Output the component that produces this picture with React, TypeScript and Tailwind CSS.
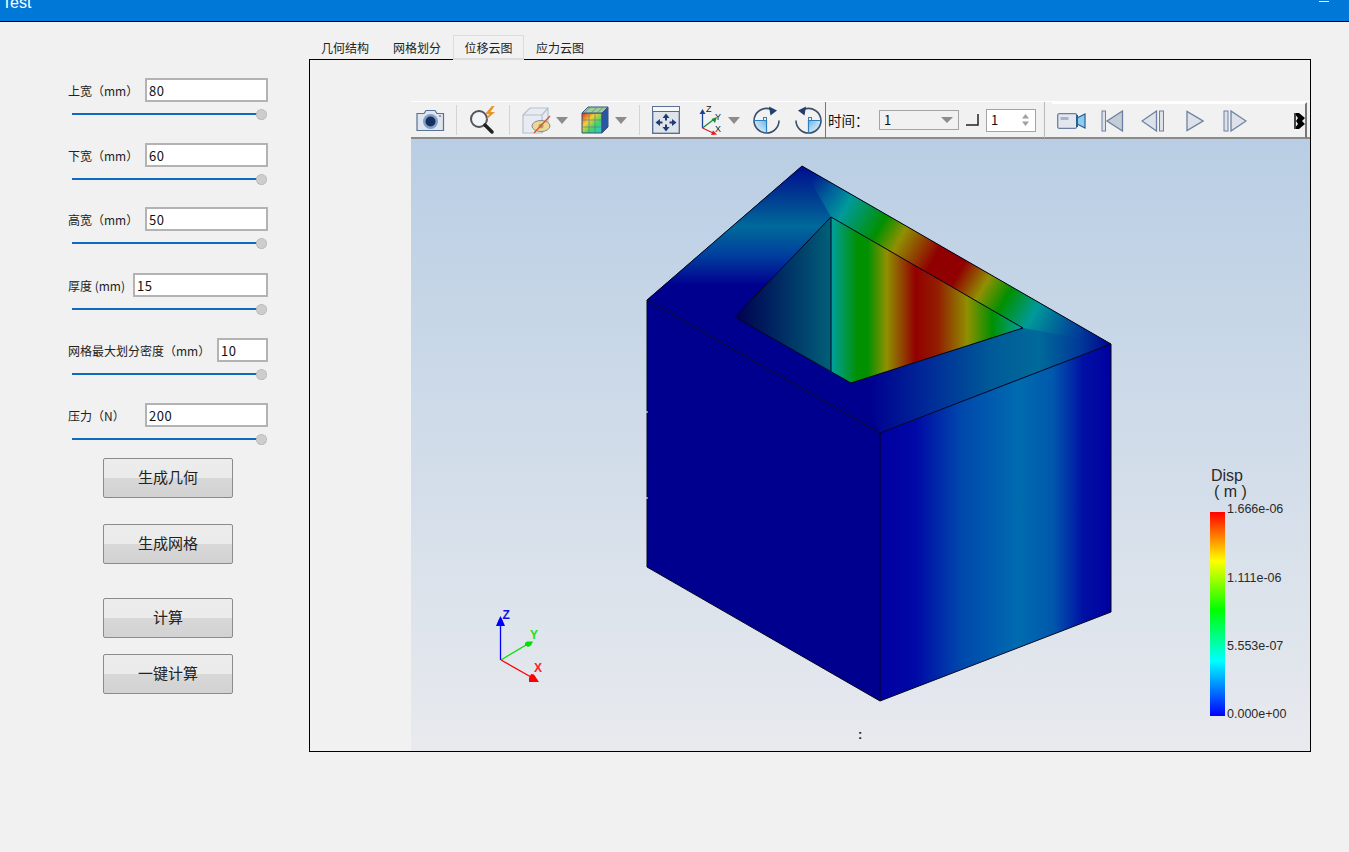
import React from "react";

const cjk = { fontFamily: '"Noto Sans CJK SC", "Noto Sans", sans-serif' };

function Row({ label, labelW, value, mt }: { label: string; labelW: string; value: string; mt: string }) {
  return (
    <div className={mt}>
      <div className="flex items-center h-[24px]">
        <div className={`${labelW} pt-[1px] text-[12px] text-[#222] whitespace-pre`}>{label}</div>
        <div className="flex-1 h-[24px] border-2 border-[#b3b3b3] bg-white flex items-center pl-[2px] pt-[1px] text-[13px] text-[#111] tracking-[0.5px]">
          {value}
        </div>
      </div>
      <div className="flex items-center h-[10px] mt-[7px] ml-[4px] w-[195px]">
        <div className="flex-1 h-[2px] bg-[#0f69bd]" />
        <div className="w-[11px] h-[11px] -ml-[6px] rounded-full bg-[#cdcdcd] border border-dotted border-[#a8a8a8]" />
      </div>
    </div>
  );
}

function Btn({ text, mt }: { text: string; mt: string }) {
  return (
    <div
      className={`${mt} ml-[35px] w-[130px] h-[40px] pb-[1px] rounded-[2px] border border-[#8b8b8b] flex items-center justify-center text-[15px] text-[#222] bg-[linear-gradient(#ececec_0%,#ebebeb_50%,#d8d8d8_50%,#d2d2d2_100%)]`}
    >
      {text}
    </div>
  );
}

function Sep({ ml }: { ml: string }) {
  return <div className={`${ml} w-[1px] h-[30px] bg-[#d4d4d4] shrink-0`} />;
}

function Caret({ ml }: { ml: string }) {
  return (
    <svg className={`${ml} shrink-0`} width="12" height="7" viewBox="0 0 12 7">
      <path d="M0 0H12L6 7Z" fill="#8c8c8c" />
    </svg>
  );
}

function CameraIcon() {
  return (
    <svg width="29" height="26" viewBox="0 0 29 26">
      <path d="M1 6.500h7l2-3h9l2 3h6.500v17H1z" fill="#dfe5ee" stroke="#5a7196" strokeWidth="1.200" />
      <circle cx="14.500" cy="14.500" r="7.500" fill="#7f9fc6" />
      <circle cx="14.500" cy="14.500" r="5" fill="#15305f" />
      <circle cx="24" cy="9" r="1" fill="#6c84a8" />
    </svg>
  );
}

function ZoomBolt() {
  return (
    <svg width="30" height="30" viewBox="0 0 30 30">
      <circle cx="11" cy="14" r="8" fill="#f2f5f8" stroke="#555" strokeWidth="2" />
      <path d="M17 20l7 7" stroke="#222" strokeWidth="3.500" strokeLinecap="round" />
      <path d="M24 1l-7 8h4l-3 6 9-8h-4.500l4-6z" fill="#e9932b" />
    </svg>
  );
}

function CubeEye() {
  return (
    <svg width="30" height="30" viewBox="0 0 30 30">
      <path d="M1 10l7-7h18v18l-6 7H1z" fill="#e8ecf2" stroke="#b4bfce" strokeWidth="1.200" />
      <path d="M1 10h19v18M20 10l6-7" fill="none" stroke="#b4bfce" strokeWidth="1.200" />
      <ellipse cx="19" cy="21" rx="9" ry="5.500" fill="#f0d98e" stroke="#7d8aa0" />
      <circle cx="19" cy="21" r="2.500" fill="#a9a37a" />
      <path d="M12 28L28 11" stroke="#d4562a" strokeWidth="1.300" />
    </svg>
  );
}

function ColorCube() {
  return (
    <svg width="28" height="28" viewBox="0 0 28 28">
      <defs>
        <linearGradient id="cc" x1="0" y1="0" x2="1" y2="1">
          <stop offset="0" stopColor="#e02b20" />
          <stop offset="0.350" stopColor="#f2d033" />
          <stop offset="0.650" stopColor="#3fd46a" />
          <stop offset="1" stopColor="#2fbfe8" />
        </linearGradient>
      </defs>
      <path d="M1 7h20v20H1z" fill="url(#cc)" stroke="#38507a" />
      <path d="M1 7l6-6h20l-6 6z" fill="#9ccf9b" stroke="#38507a" />
      <path d="M21 7l6-6v20l-6 6z" fill="#2a56a8" stroke="#38507a" />
      <path d="M8 7v20M14 7v20M1 14h20M1 21h20M9 1.500L3 7M16 1.500L10 7M22 1.500L16 7" stroke="#5a6f92" strokeWidth="0.600" fill="none" />
    </svg>
  );
}

function MoveIcon() {
  return (
    <svg width="28" height="28" viewBox="0 0 28 28">
      <rect x="0.700" y="0.700" width="26.600" height="26.600" fill="#dfe4ec" stroke="#54698e" strokeWidth="1.300" />
      <rect x="1" y="1" width="26" height="4" fill="#f7f8fa" />
      <path d="M1 5.500h26" stroke="#54698e" />
      <path d="M14 7.500l3.500 4.500h-2.500v2.500h-2V12h-2.500zM14 25.500l-3.500-4.500h2.500v-2.500h2V21h2.500zM3.500 16.500l4.500-3.500v2.500h2.500v2H8V20zM24.500 16.500L20 20v-2.500h-2.500v-2H20V13z" fill="#1f3d70" />
    </svg>
  );
}

function AxesIcon() {
  return (
    <svg width="26" height="30" viewBox="0 0 26 30" style={{ fontFamily: '"Liberation Sans", sans-serif' }}>
      <path d="M5.500 23V8" stroke="#1c3f95" strokeWidth="1.300" />
      <path d="M5.500 4l3 5h-6z" fill="#1c3f95" />
      <path d="M5.500 23L16 15" stroke="#1f8a3d" strokeWidth="1.300" />
      <path d="M20 12l-2 6-3.500-4z" fill="#1f8a3d" />
      <path d="M5.500 23L16 28" stroke="#d81f26" strokeWidth="1.300" />
      <path d="M20 29.500l-6 .5 2-4.500z" fill="#d81f26" />
      <text x="9" y="7" fontSize="9" fill="#222">Z</text>
      <text x="18" y="15" fontSize="9" fill="#222">Y</text>
      <text x="18" y="27" fontSize="9" fill="#222">X</text>
    </svg>
  );
}

function RotIcon({ flip }: { flip?: boolean }) {
  return (
    <svg width="27" height="28" viewBox="0 0 27 28" style={flip ? { transform: "scaleX(-1)" } : undefined}>
      <defs>
        <radialGradient id="quad" gradientUnits="userSpaceOnUse" cx="13.500" cy="14.500" r="13">
          <stop offset="0" stopColor="#6db6ea" />
          <stop offset="1" stopColor="#d3e9f8" />
        </radialGradient>
      </defs>
      <path d="M13.500 14.500H1a12.500 12.500 0 0 0 12.500 12.500z" fill="url(#quad)" />
      <path d="M18 3.300A12.500 12.500 0 0 0 1 14.500a12.500 12.500 0 0 0 25 0" fill="none" stroke="#3c4f6b" strokeWidth="1.600" />
      <path d="M1 14.500h12.500V27" fill="none" stroke="#2f7fc0" strokeWidth="1.200" />
      <path d="M16 .5l8 4-6.500 5z" fill="#21406f" />
      <rect x="10.500" y="11.500" width="3" height="3" fill="none" stroke="#2f7fc0" />
    </svg>
  );
}

function VideoIcon() {
  return (
    <svg width="29" height="18" viewBox="0 0 29 18">
      <rect x="0.700" y="1.700" width="19" height="14.600" rx="1.500" fill="#e2e6ee" stroke="#6d7f9e" strokeWidth="1.300" />
      <rect x="3.500" y="5" width="8" height="3" fill="#aab4c6" />
      <path d="M20 6l8-4v14l-8-4z" fill="#8bcdf0" stroke="#2d5c91" strokeWidth="1.200" />
      <path d="M20 3v12" stroke="#2d5c91" strokeWidth="2" />
    </svg>
  );
}

function Tri({ dir }: { dir: "first" | "prev" | "play" | "next" }) {
  const stroke = "#6d80a0";
  const fill = "#dde2ea";
  if (dir === "first")
    return (
      <svg width="23" height="22" viewBox="0 0 23 22">
        <rect x="1" y="1" width="3.500" height="20" fill={fill} stroke={stroke} />
        <path d="M21.500 1v20L6 11z" fill="#c4ccd8" stroke={stroke} strokeWidth="1.300" />
      </svg>
    );
  if (dir === "prev")
    return (
      <svg width="24" height="22" viewBox="0 0 24 22">
        <path d="M15.500 1v20L1 11z" fill={fill} stroke={stroke} strokeWidth="1.300" />
        <rect x="18.500" y="1" width="4" height="20" fill={fill} stroke={stroke} />
      </svg>
    );
  if (dir === "play")
    return (
      <svg width="18" height="22" viewBox="0 0 18 22">
        <path d="M1 1.500v19L17 11z" fill={fill} stroke={stroke} strokeWidth="1.300" />
      </svg>
    );
  return (
    <svg width="24" height="22" viewBox="0 0 24 22">
      <rect x="1" y="1" width="4" height="20" fill={fill} stroke={stroke} />
      <path d="M8 1v20L23 11z" fill={fill} stroke={stroke} strokeWidth="1.300" />
    </svg>
  );
}

function Handle() {
  return (
    <svg width="11" height="18" viewBox="0 0 11 18">
      <path d="M0 1h5l6 5-3 3 3 3-6 5H0l4-5-2-3 2-3z" fill="#000" />
      <path d="M0 1h2v16H0z" fill="#444" />
    </svg>
  );
}

function Toolbar() {
  return (
    <div className="flex h-[38px] border-t border-white bg-[#f1f1f1] shadow-[inset_0_-2px_0_#8b8b8b] overflow-hidden">
      <div className="flex items-center w-[414px] shrink-0 h-[36px]">
        <div className="ml-[5px]"><CameraIcon /></div>
        <Sep ml="ml-[11px]" />
        <div className="ml-[11px]"><ZoomBolt /></div>
        <Sep ml="ml-[11px]" />
        <div className="ml-[12px]"><CubeEye /></div>
        <Caret ml="ml-[4px]" />
        <div className="ml-[13px]"><ColorCube /></div>
        <Caret ml="ml-[6px]" />
        <Sep ml="ml-[12px]" />
        <div className="ml-[12px]"><MoveIcon /></div>
        <div className="ml-[17px]"><AxesIcon /></div>
        <Caret ml="ml-[5px]" />
        <div className="ml-[13px]"><RotIcon /></div>
        <div className="ml-[15px]"><RotIcon flip /></div>
      </div>
      <div className="w-[1px] h-[38px] bg-[#777] shrink-0" />
      <div className="flex items-center h-[36px] w-[219px] shrink-0">
        <div className="ml-[2px] w-[51px] text-[13.500px] text-[#111] whitespace-pre shrink-0">时间：</div>
        <div className="w-[80px] h-[20px] shrink-0 border border-[#a4a4a4] bg-[#f1f1f1] flex items-center justify-between pl-[4px] pr-[5px] text-[13px] text-[#111]">
          1
          <svg width="12" height="6" viewBox="0 0 12 6"><path d="M0 0H12L6 6Z" fill="#8c8c8c" /></svg>
        </div>
        <svg className="ml-[7px] shrink-0" width="13" height="12" viewBox="0 0 13 12"><path d="M0 11H12V0" fill="none" stroke="#222" strokeWidth="1.500" /></svg>
        <div className="ml-[7px] w-[50px] h-[23px] shrink-0 border border-[#a4a4a4] bg-white flex items-center justify-between pl-[4px] pr-[5px] text-[13px] text-[#111]">
          1
          <svg width="9" height="14" viewBox="0 0 9 14"><path d="M1 5.500h7L4.500 1zM1 8.500h7L4.500 13z" fill="#a0a0a0" /></svg>
        </div>
        <div className="ml-[8px] w-[1px] h-[36px] bg-[#b8b8b8] shrink-0" />
      </div>
      <div className="ml-[7px] w-[255px] shrink-0 h-[37px] flex items-center border-t-2 border-white border-r-2 border-r-[#777] border-b-2 border-b-[#8b8b8b]">
        <div className="ml-[5px]"><VideoIcon /></div>
        <div className="ml-[15px]"><Tri dir="first" /></div>
        <div className="ml-[17px]"><Tri dir="prev" /></div>
        <div className="ml-[21px]"><Tri dir="play" /></div>
        <div className="ml-[19px]"><Tri dir="next" /></div>
        <div className="ml-[47px]"><Handle /></div>
      </div>
    </div>
  );
}

function Model() {
  const label = { fontFamily: '"Liberation Sans", Arial, sans-serif' };
  return (
    <svg className="absolute inset-0" width="899" height="611" viewBox="411 139 899 611">
      <defs>
        <linearGradient id="strip" gradientUnits="userSpaceOnUse" x1="802" y1="166" x2="1111" y2="344">
          <stop offset="0.040" stopColor="#005a9a" stopOpacity="0" />
          <stop offset="0.100" stopColor="#0078a0" stopOpacity="0.600" />
          <stop offset="0.165" stopColor="#009a9a" />
          <stop offset="0.275" stopColor="#009000" />
          <stop offset="0.340" stopColor="#909000" />
          <stop offset="0.450" stopColor="#900000" />
          <stop offset="0.530" stopColor="#900000" />
          <stop offset="0.610" stopColor="#909000" />
          <stop offset="0.680" stopColor="#009000" />
          <stop offset="0.770" stopColor="#009a9a" />
          <stop offset="0.850" stopColor="#00709a" stopOpacity="0.500" />
          <stop offset="0.930" stopColor="#00409a" stopOpacity="0" />
        </linearGradient>
        <linearGradient id="leftTop" gradientUnits="userSpaceOnUse" x1="0" y1="168" x2="0" y2="285">
          <stop offset="0" stopColor="#00108f" />
          <stop offset="0.250" stopColor="#003c92" />
          <stop offset="0.500" stopColor="#006a9a" />
          <stop offset="0.750" stopColor="#003e9e" />
          <stop offset="1" stopColor="#00008f" />
        </linearGradient>
        <linearGradient id="frontTop" gradientUnits="userSpaceOnUse" x1="870" y1="0" x2="1111" y2="0">
          <stop offset="0" stopColor="#00008f" />
          <stop offset="0.250" stopColor="#002c98" />
          <stop offset="0.500" stopColor="#005a98" />
          <stop offset="0.700" stopColor="#006a9a" />
          <stop offset="0.870" stopColor="#003a98" />
          <stop offset="1" stopColor="#00048f" />
        </linearGradient>
        <linearGradient id="wallR" gradientUnits="userSpaceOnUse" x1="831" y1="0" x2="1023" y2="0">
          <stop offset="0" stopColor="#00a0a0" />
          <stop offset="0.140" stopColor="#009000" />
          <stop offset="0.190" stopColor="#009000" />
          <stop offset="0.290" stopColor="#909000" />
          <stop offset="0.440" stopColor="#920000" />
          <stop offset="0.560" stopColor="#922000" />
          <stop offset="0.710" stopColor="#909000" />
          <stop offset="0.840" stopColor="#009000" />
          <stop offset="0.980" stopColor="#00a090" />
        </linearGradient>
        <linearGradient id="wallL" gradientUnits="userSpaceOnUse" x1="735" y1="0" x2="831" y2="0">
          <stop offset="0" stopColor="#000050" />
          <stop offset="0.400" stopColor="#002460" />
          <stop offset="1" stopColor="#006078" />
        </linearGradient>
        <linearGradient id="faceR" gradientUnits="userSpaceOnUse" x1="880" y1="0" x2="1111" y2="0">
          <stop offset="0" stopColor="#0000a0" />
          <stop offset="0.150" stopColor="#0008a6" />
          <stop offset="0.350" stopColor="#0048ac" />
          <stop offset="0.600" stopColor="#006cb0" />
          <stop offset="0.750" stopColor="#0058ac" />
          <stop offset="0.880" stopColor="#0010a4" />
          <stop offset="1" stopColor="#0000a0" />
        </linearGradient>
        <linearGradient id="legend" x1="0" y1="1" x2="0" y2="0">
          <stop offset="0" stopColor="#0000ff" />
          <stop offset="0.270" stopColor="#00ffff" />
          <stop offset="0.520" stopColor="#00ff00" />
          <stop offset="0.760" stopColor="#ffff00" />
          <stop offset="1" stopColor="#ff0000" />
        </linearGradient>
      </defs>

      {/* left and right faces */}
      <path d="M647 300L880 433V701L647 567Z" fill="#00008f" />
      <path d="M880 433L1111 344V612L880 701Z" fill="url(#faceR)" />

      {/* top face */}
      <path d="M802 166L1111 344L880 433L647 300Z" fill="#00008f" />
      <path d="M802 166L880 211L831 290L735 317L647 300Z" fill="url(#leftTop)" />
      <path d="M851 383L1023 328L1000 280L1111 344L880 433Z" fill="url(#frontTop)" />
      <path d="M802 166L1111 344L1023 328L831 217Z" fill="url(#strip)" />

      {/* recess */}
      <path d="M831 217L735 317L831 372Z" fill="url(#wallL)" />
      <path d="M831 217L1023 328L851 383L831 372Z" fill="url(#wallR)" />

      {/* edges */}
      <g fill="none" stroke="#05051f" strokeWidth="1">
        <path d="M802 166L1111 344L880 433L647 300Z" />
        <path d="M647 300V567L880 701L1111 612V344M880 433V701" />
        <path d="M831 217L735 317L851 383L1023 328Z" />
        <path d="M831 217V372" />
      </g>
      <path d="M646 412h2M646 498h2" stroke="#ffffff" />

      {/* orientation widget */}
      <path d="M500.500 660V625" stroke="#0000ff" strokeWidth="1.300" />
      <path d="M500.500 616l2 4 2.500 6h-9l2.500-6z" fill="#0000ff" />
      <path d="M501 660L526 645" stroke="#00e000" strokeWidth="1.300" />
      <path d="M533 641.500l-2 4-3 1.500-3-2v-2l2-1.500z" fill="#00e000" />
      <path d="M501 660L531 677" stroke="#ff0000" strokeWidth="1.300" />
      <path d="M539 682l-10 0v-4l2-4 3 0.500z" fill="#ff0000" />
      <g style={label} fontWeight="700" fontSize="12">
        <text x="502.500" y="619" fill="#1010e0">Z</text>
        <text x="530" y="639" fill="#20e020">Y</text>
        <text x="534" y="672" fill="#ff2020">X</text>
      </g>

      {/* legend */}
      <rect x="1210" y="512" width="15" height="204" fill="url(#legend)" />
      <g style={label} fill="#2a2a2a">
        <text x="1211" y="481" fontSize="16">Disp</text>
        <text x="1214" y="497" fontSize="16" xmlSpace="preserve">( m )</text>
        <g fontSize="12.500">
          <text x="1227" y="513">1.666e-06</text>
          <text x="1227" y="582">1.111e-06</text>
          <text x="1227" y="650">5.553e-07</text>
          <text x="1227" y="718">0.000e+00</text>
        </g>
      </g>
      <text x="858" y="739" style={label} fontSize="13" fontWeight="700" fill="#222">:</text>
    </svg>
  );
}

export default function App() {
  return (
    <div className="w-[1349px] h-[852px] overflow-hidden bg-[#f1f1f1] flex flex-col" style={cjk}>
      <div className="h-[22px] bg-[#0078d7] border-b border-black flex justify-between overflow-hidden shrink-0">
        <div className="pl-[2px] -mt-[6px] text-[16px] leading-[18px] text-white" style={{ fontFamily: '"Liberation Sans", sans-serif' }}>Test</div>
        <div className="w-[10px] h-[1px] bg-white mt-[1px] mr-[20px]" />
      </div>
      <div className="flex flex-1 min-h-0">
        <div className="w-[309px] shrink-0 pl-[68px]">
          <div className="w-[200px]">
            <Row label="上宽（mm）" labelW="w-[77px]" value="80" mt="mt-[56px]" />
            <Row label="下宽（mm）" labelW="w-[77px]" value="60" mt="mt-[24px]" />
            <Row label="高宽（mm）" labelW="w-[77px]" value="50" mt="mt-[23px]" />
            <Row label="厚度 (mm)" labelW="w-[65px]" value="15" mt="mt-[25px]" />
            <Row label="网格最大划分密度（mm）" labelW="w-[149px]" value="10" mt="mt-[24px]" />
            <Row label="压力（N）" labelW="w-[77px]" value="200" mt="mt-[24px]" />
          </div>
          <Btn text="生成几何" mt="mt-[14px]" />
          <Btn text="生成网格" mt="mt-[26px]" />
          <Btn text="计算" mt="mt-[34px]" />
          <Btn text="一键计算" mt="mt-[16px]" />
        </div>
        <div className="w-[1002px] shrink-0 pt-[13px]">
          <div className="flex h-[24px] text-[12px] text-[#222]">
            <div className="w-[72px] pt-[2px] flex items-center justify-center">几何结构</div>
            <div className="w-[72px] pt-[2px] flex items-center justify-center">网格划分</div>
            <div className="w-[71px] h-[25px] pt-[2px] flex items-center justify-center border border-[#dcdcdc] border-b-2 bg-[#f2f2f2] relative z-10">位移云图</div>
            <div className="w-[72px] pt-[2px] flex items-center justify-center">应力云图</div>
          </div>
          <div className="h-[693px] border border-black pl-[101px] pt-[41px] flex flex-col">
            <Toolbar />
            <div className="relative flex-1 bg-linear-to-b from-[#b9cee4] to-[#e8eaee]">
              <Model />
            </div>
          </div>
        </div>
      </div>
    </div>
  );
}
